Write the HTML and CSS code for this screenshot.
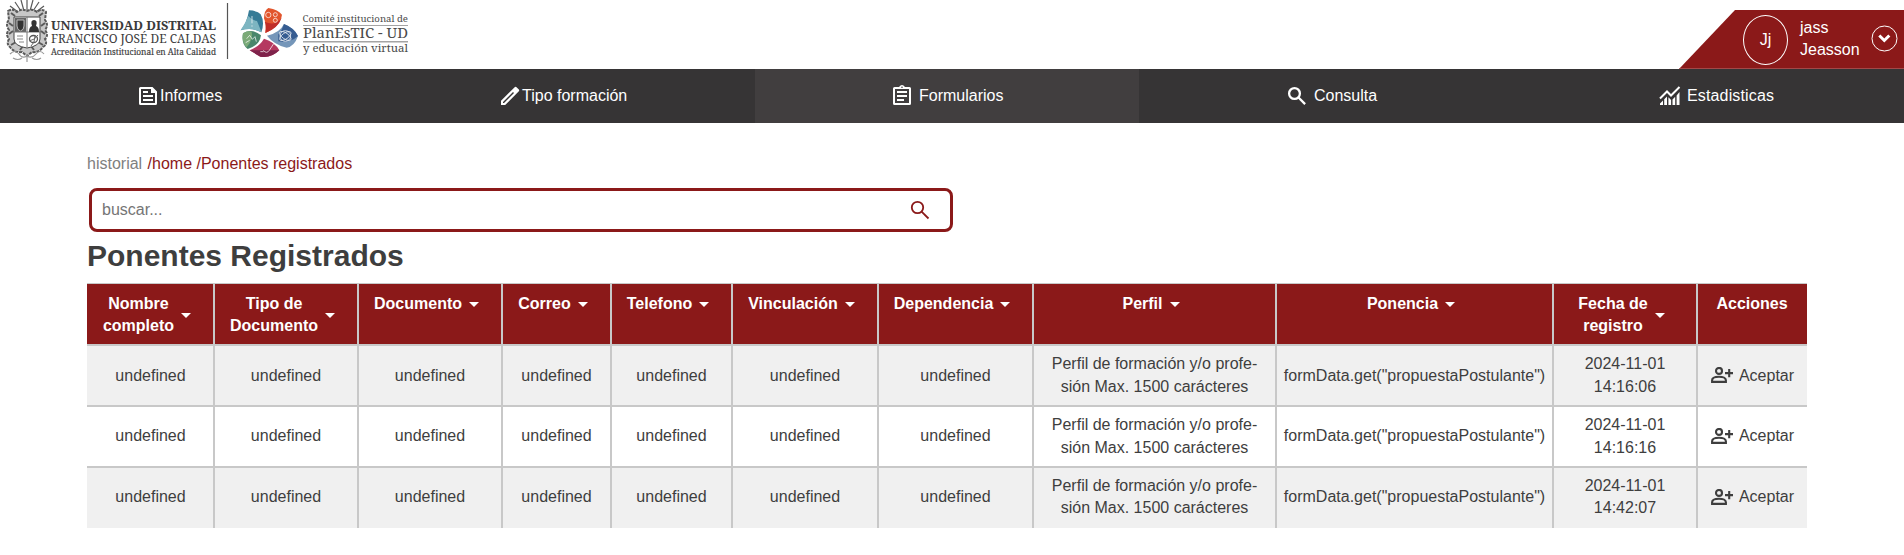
FILE: index.html
```html
<!DOCTYPE html>
<html lang="es">
<head>
<meta charset="utf-8">
<title>Ponentes registrados</title>
<link rel="stylesheet" href="styles.css">
</head>
<body>
<svg class="defs" width="0" height="0" aria-hidden="true">
  <symbol id="arrow" viewBox="0 0 24 24"><path d="M7 10l5 5 5-5z"/></symbol>
  <symbol id="person-add" viewBox="0 0 22 16"><g fill="none" stroke="currentColor" stroke-width="2.1"><circle cx="8" cy="3.9" r="3"/><path d="M1.100 14.900V13.200C1.100 11 4 9.700 8 9.700s6.900 1.300 6.900 3.500V14.900z"/><path d="M14 6.1h8M18.2 2v8.2"/></g></symbol>
</svg>
<header class="top">
  <svg class="brand" width="420" height="69" viewBox="0 0 420 69">
    <g fill="none" stroke="#5a5a5a" stroke-width="1.2">
      <path d="M27 12V0M24 11L21 0M30 11L33 0M21 11L15 2M33 11L39 2M18 12L10 6M36 12L44 6"/>
      <path d="M8 11q5-3 9 1q5-4 10-1q5-3 10 1q5-4 9 0l-1 8q4 5 0 10q4 5 0 9q3 5-2 8q-4 6-11 5l-5 4-5-4q-8 1-12-5q-4-3-1-8q-4-5 0-9q-4-6 0-10z" fill="#c8c8c8" stroke-width="2" stroke-dasharray="3 1"/>
      <path d="M11 13l4 3M43 13l-4 3M9 23l4 3M45 23l-4 3M9 34l4-3M45 34l-4-3M11 45l5-3M43 45l-5-3M20 50l3-4M34 50l-3-4" stroke-width="2"/>
      <path d="M10 54q5-5 9 0q3 5 8 2q5 3 9 -2q4-5 8 0M13 58q5 3 9 0M32 58q5 3 9 0M27 54v8" stroke="#999"/>
    </g>
    <path d="M14 17h26v22q0 7-13 9q-13-2-13-9z" fill="#fff" stroke="#444"/>
    <path d="M15 18h11v14H15z" fill="#666"/>
    <path d="M17 20h7v6q0 4-3.500 5q-3.500-1-3.500-5z" fill="#333" stroke="#bbb"/>
    <path d="M27 17v30M14 32h26" stroke="#777"/>
    <path d="M29 32q0-5 3-6q-2-6 2-6q4 0 2 6q3 1 3 6z" fill="#333"/>
    <path d="M17 36h6M17 39h6M19 42h5" stroke="#888"/>
    <ellipse cx="33.500" cy="39" rx="4" ry="3.500" fill="none" stroke="#555" stroke-width="1.300"/>
    <path d="M29 41q6-1 9-6M31 46q4-3 4-10" fill="none" stroke="#666"/>
    <g class="slab" fill="#3b3b3b">
      <text x="51" y="29.500" font-size="13.200" font-weight="bold" textLength="165" lengthAdjust="spacingAndGlyphs">UNIVERSIDAD DISTRITAL</text>
      <text x="51" y="43" font-size="12.400" textLength="165" lengthAdjust="spacingAndGlyphs">FRANCISCO JOSÉ DE CALDAS</text>
      <text x="51" y="54.500" font-size="8.500" textLength="165" lengthAdjust="spacingAndGlyphs" stroke="#3b3b3b" stroke-width=".15">Acreditación Institucional en Alta Calidad</text>
    </g>
    <path d="M227.500 3v56" stroke="#555" stroke-width="1.200"/>
    <g transform="translate(215 0) scale(.3333)">
      <path d="M77 91Q96 70 102 31Q128 32 137 43Q150 66 139 97Q110 80 77 91z" fill="#367b96"/>
      <path d="M77 91Q92 68 100 48Q112 62 126 63L137 90L139 97Q110 80 77 91z" fill="#7db5c1"/>
      <path d="M147 55Q148 30 160 24Q190 29 201 44Q196 79 151 99Q155 75 147 55z" fill="#e2552c"/>
      <path d="M151 99Q155 75 149 65Q180 80 200 53Q190 84 151 99z" fill="#c02e28"/>
      <path d="M156 107Q194 99 207 72Q238 84 249 108Q238 140 215 143Q178 135 156 107z" fill="#7596b9"/>
      <path d="M190 103Q200 94 207 72Q238 84 249 108Q225 130 190 124z" fill="#365c91"/>
      <path d="M147 116Q180 126 193 151Q167 176 136 170L104 151Q133 140 147 116z" fill="#b53860"/>
      <path d="M104 151Q145 151 193 151Q167 176 136 170z" fill="#7e234b"/>
      <path d="M84 100Q111 84 138 106Q134 137 98 147Q78 132 84 100z" fill="#49866b"/>
      <path d="M84 100Q98 91 110 95Q116 117 95 142Q79 128 84 100z" fill="#7baa78"/>
      <g fill="none" stroke="#fff" stroke-width="2.500" opacity=".85">
        <circle cx="160" cy="45" r="8"/><circle cx="181" cy="44" r="6"/><circle cx="181" cy="61" r="6"/>
        <path d="M111 48v22M111 76v4M95 116l9-10 8 12 8-8 4 15M92 128l12-7"/>
        <ellipse cx="211" cy="108" rx="20" ry="9" transform="rotate(35 211 108)"/><ellipse cx="211" cy="108" rx="20" ry="9" transform="rotate(-35 211 108)"/><circle cx="211" cy="108" r="16"/>
        <path d="M145 151q10 12 18 0l13-20M136 155h10"/>
      </g>
    </g>
    <g class="slab" fill="#4a4a4a">
      <text x="302.500" y="22" font-size="9.800" textLength="105.500" lengthAdjust="spacingAndGlyphs">Comité institucional de</text>
      <text x="303" y="38.200" font-size="14" textLength="105" lengthAdjust="spacingAndGlyphs">PlanEsTIC - UD</text>
      <text x="303" y="51.800" font-size="11" textLength="105" lengthAdjust="spacingAndGlyphs">y educación virtual</text>
      <path d="M303 25h105v.6H303zM303 41.500h105v.8H303z"/>
    </g>
  </svg>
  <div class="user">
    <div class="avatar">Jj</div>
    <div class="name">jass<br>Jeasson</div>
    <svg class="toggle" width="27" height="27" viewBox="0 0 27 27" fill="none" stroke="#fff"><circle cx="13.500" cy="13.500" r="12.500"/><path d="M8.300 10.500l5 5 5-5" stroke-width="3"/></svg>
  </div>
</header>
<nav class="menu">
  <a class="item informes"><svg width="24" height="24" viewBox="0 0 24 24"><path fill-rule="evenodd" d="M4.500 3h12L21 7.500v12q0 1.500-1.500 1.500h-15Q3 21 3 19.500v-15Q3 3 4.500 3zM5 5v14h14V9h-4V5zM7 7h5v2H7zm0 4h10v2H7zm0 4h10v2H7z"/></svg>Informes</a>
  <a class="item tipo"><svg width="24" height="24" viewBox="0 0 24 24"><path fill-rule="evenodd" d="M3 16.800V21h4.200L20.600 7.600q1.200-1.200 0-2.400l-1.800-1.800q-1.200-1.200-2.400 0zM5 18l10-10 1 1L6 19H5z"/></svg>Tipo formación</a>
  <a class="item active"><svg width="24" height="24" viewBox="0 0 24 24"><path fill-rule="evenodd" d="M4.500 3H9q3-4 6 0h4.500Q21 3 21 4.500v15q0 1.500-1.500 1.500h-15Q3 21 3 19.500v-15Q3 3 4.500 3zM5 5v14h14V5zM7 7h10v2H7zm0 4h10v2H7zm0 4h7v2H7zM12 2.500a.8.8 0 100 1.600.8.8 0 000-1.600z"/></svg><span>Formularios</span></a>
  <a class="item consulta"><svg class="outline" width="24" height="24" viewBox="0 0 24 24"><circle cx="9.500" cy="9.500" r="5.400"/><path d="M13.500 13.500l6.600 6.600"/></svg><span>Consulta</span></a>
  <a class="item stats"><svg width="24" height="24" viewBox="0 0 24 24"><path d="M2 19.500L5 16.500V21H2zM6.200 15.300L9 12.500V21H6.200zM10.400 13.200l2.700 2.700V21h-2.700zM14.500 15.500l2.700-2.700V21h-2.700zM18.600 11.500L21.500 8v13h-2.900z"/><path d="M2 14.500l7-7 4 4 8.500-8.500" fill="none" stroke="#fff" stroke-width="2"/></svg><span>Estadisticas</span></a>
</nav>
<main class="page">
  <div class="crumbs"><span>historial </span>/home /Ponentes registrados</div>
  <label class="search"><input type="text" placeholder="buscar..."><svg width="24" height="24" viewBox="0 0 24 24" fill="none" stroke="currentColor" stroke-width="1.800"><circle cx="9.500" cy="9.500" r="5.700"/><path d="M13.600 13.600l6.900 6.900"/></svg></label>
  <h1>Ponentes Registrados</h1>
  <table class="grid">
    <colgroup><col class="w128"><col class="w144"><col class="w144"><col class="w109"><col class="w121"><col class="w146"><col class="w155"><col class="w243"><col class="w277"><col class="w144"><col class="w109"></colgroup>
    <thead><tr>
      <th><div>Nombre<br>completo<svg><use href="#arrow"/></svg></div></th>
      <th><div>Tipo de<br>Documento<svg><use href="#arrow"/></svg></div></th>
      <th><div>Documento<svg><use href="#arrow"/></svg></div></th>
      <th><div>Correo<svg><use href="#arrow"/></svg></div></th>
      <th><div>Telefono<svg><use href="#arrow"/></svg></div></th>
      <th><div>Vinculación<svg><use href="#arrow"/></svg></div></th>
      <th><div>Dependencia<svg><use href="#arrow"/></svg></div></th>
      <th><div>Perfil<svg><use href="#arrow"/></svg></div></th>
      <th><div>Ponencia<svg><use href="#arrow"/></svg></div></th>
      <th><div>Fecha de<br>registro<svg><use href="#arrow"/></svg></div></th>
      <th>Acciones</th>
    </tr></thead>
    <tbody>
      <tr><td>undefined</td><td>undefined</td><td>undefined</td><td>undefined</td><td>undefined</td><td>undefined</td><td>undefined</td><td>Perfil de formación y/o profe-<br>sión Max. 1500 carácteres</td><td>formData.get("propuestaPostulante")</td><td>2024-11-01<br>14:16:06</td><td><a class="accept"><svg><use href="#person-add"/></svg>Aceptar</a></td></tr>
      <tr><td>undefined</td><td>undefined</td><td>undefined</td><td>undefined</td><td>undefined</td><td>undefined</td><td>undefined</td><td>Perfil de formación y/o profe-<br>sión Max. 1500 carácteres</td><td>formData.get("propuestaPostulante")</td><td>2024-11-01<br>14:16:16</td><td><a class="accept"><svg><use href="#person-add"/></svg>Aceptar</a></td></tr>
      <tr><td>undefined</td><td>undefined</td><td>undefined</td><td>undefined</td><td>undefined</td><td>undefined</td><td>undefined</td><td>Perfil de formación y/o profe-<br>sión Max. 1500 carácteres</td><td>formData.get("propuestaPostulante")</td><td>2024-11-01<br>14:42:07</td><td><a class="accept"><svg><use href="#person-add"/></svg>Aceptar</a></td></tr>
    </tbody>
  </table>
</main>
</body>
</html>
```

FILE: styles.css
```css
* { box-sizing: border-box; }
body { margin: 0; background: #fff; color: #3e3e3e; font: 16px/23px "Liberation Sans", Arial, sans-serif; overflow: hidden; }
.defs { display: block; height: 0; }
.top { height: 69px; display: flex; justify-content: space-between; align-items: flex-end; }
.brand { display: block; }
.slab { font-family: "Noto Serif", "DejaVu Serif", serif; }
.user { width: 225px; height: 59px; background: #8b1919; border-bottom: 1px solid #a34848; clip-path: polygon(56px 0, 100% 0, 100% 100%, 0 100%); color: #fff; display: flex; align-items: center; padding-left: 64px; }
.avatar { width: 45px; height: 50px; border: 1px solid #fff; border-radius: 50%; display: flex; align-items: center; justify-content: center; margin-top: 1px; }
.name { margin-left: 12px; width: 71px; line-height: 22px; }
.toggle { margin-top: -1px; }
.menu { height: 54px; background: #363435; display: grid; grid-template-columns: 371px 384px 384px 384px 381px; overflow: hidden; }
.item { color: #fff; display: flex; align-items: center; padding-bottom: 1px; }
.item svg { fill: #fff; flex: none; }
.item svg.outline { fill: none; stroke: #fff; stroke-width: 2.3; }
.item span { margin-left: 5px; }
.informes { padding-left: 136px; }
.tipo { padding-left: 127px; }
.active { background: #413e3f; padding-left: 135px; }
.consulta { padding-left: 146px; }
.stats { padding-left: 135px; letter-spacing: .15px; }
.page { padding: 29px 97px 0 87px; }
.crumbs { height: 36px; line-height: 24px; color: #8b1919; }
.crumbs span { color: #808080; margin-right: 1px; }
.search { display: flex; align-items: center; width: 864px; height: 44px; margin-left: 2px; border: 3px solid #8b1919; border-radius: 8px; padding: 0 18px 0 10px; color: #8b1919; }
.search input { flex: 1; border: 0; padding: 0 0 2px; outline: 0; font: inherit; background: none; }
.search input::placeholder { color: #757575; }
h1 { margin: 7px 0 10px; font-size: 30px; line-height: 34px; }
.grid { border-collapse: separate; border-spacing: 0; table-layout: fixed; width: 1720px; }
.w128 { width: 128px; }
.w144 { width: 144px; }
.w109 { width: 109px; }
.w121 { width: 121px; }
.w146 { width: 146px; }
.w155 { width: 155px; }
.w243 { width: 243px; }
.w277 { width: 277px; }
.grid th { height: 63px; padding: 9px 0 0; vertical-align: top; background: #8b1919; color: #fff; border-top: 1px solid #c8c8c8; border-bottom: 2px solid #c8c8c8; border-right: 2px solid #c8c8c8; line-height: 22px; }
.grid th div { position: relative; display: inline-block; padding-right: 24px; }
.grid th svg { position: absolute; right: 0; top: calc(50% - 12px); width: 24px; height: 24px; fill: #fff; }
.grid td { height: 61px; padding: 0 0 2px; text-align: center; vertical-align: middle; white-space: nowrap; border-right: 2px solid #c8c8c8; border-bottom: 2px solid #c8c8c8; }
.grid tr > :last-child { border-right: 0; }
.grid tr > :first-child { padding-left: 1px; }
.grid tr > th:last-child { padding-right: 1px; }
.grid tbody tr:nth-child(odd) { background: #f0f0f0; }
.grid tbody tr:first-child td { padding-bottom: 1px; }
.grid tbody tr:last-child td { height: 60px; border-bottom: 0; line-height: 22px; }
.accept { display: flex; align-items: center; justify-content: center; gap: 6px; }
.accept svg { width: 22px; height: 16px; }
```
